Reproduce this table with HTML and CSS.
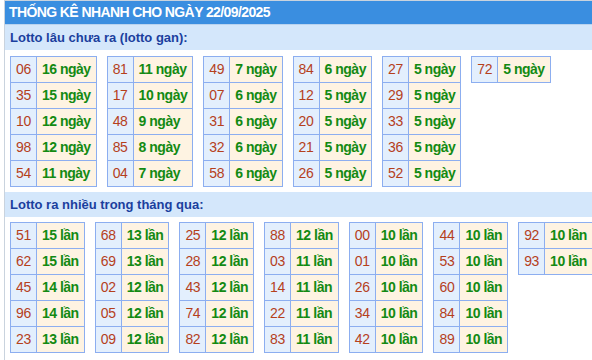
FILE: index.html
```html
<!DOCTYPE html>
<html lang="vi">
<head>
<meta charset="utf-8">
<link rel="stylesheet" href="styles.css">
</head>
<body>
<div class="box">
  <div class="title">THỐNG KÊ NHANH CHO NGÀY 22/09/2025</div>
  <div class="sub">Lotto lâu chưa ra (lotto gan):</div>
  <div class="tables first">
    <table><tr><td class="n">06</td><td class="v">16 ngày</td></tr><tr><td class="n">35</td><td class="v">15 ngày</td></tr><tr><td class="n">10</td><td class="v">12 ngày</td></tr><tr><td class="n">98</td><td class="v">12 ngày</td></tr><tr><td class="n">54</td><td class="v">11 ngày</td></tr></table>
    <table><tr><td class="n">81</td><td class="v">11 ngày</td></tr><tr><td class="n">17</td><td class="v">10 ngày</td></tr><tr><td class="n">48</td><td class="v">9 ngày</td></tr><tr><td class="n">85</td><td class="v">8 ngày</td></tr><tr><td class="n">04</td><td class="v">7 ngày</td></tr></table>
    <table><tr><td class="n">49</td><td class="v">7 ngày</td></tr><tr><td class="n">07</td><td class="v">6 ngày</td></tr><tr><td class="n">31</td><td class="v">6 ngày</td></tr><tr><td class="n">32</td><td class="v">6 ngày</td></tr><tr><td class="n">58</td><td class="v">6 ngày</td></tr></table>
    <table><tr><td class="n">84</td><td class="v">6 ngày</td></tr><tr><td class="n">12</td><td class="v">5 ngày</td></tr><tr><td class="n">20</td><td class="v">5 ngày</td></tr><tr><td class="n">21</td><td class="v">5 ngày</td></tr><tr><td class="n">26</td><td class="v">5 ngày</td></tr></table>
    <table><tr><td class="n">27</td><td class="v">5 ngày</td></tr><tr><td class="n">29</td><td class="v">5 ngày</td></tr><tr><td class="n">33</td><td class="v">5 ngày</td></tr><tr><td class="n">36</td><td class="v">5 ngày</td></tr><tr><td class="n">52</td><td class="v">5 ngày</td></tr></table>
    <table><tr><td class="n">72</td><td class="v">5 ngày</td></tr></table>
  </div>
  <div class="sub">Lotto ra nhiều trong tháng qua:</div>
  <div class="tables">
    <table><tr><td class="n">51</td><td class="v">15 lần</td></tr><tr><td class="n">62</td><td class="v">15 lần</td></tr><tr><td class="n">45</td><td class="v">14 lần</td></tr><tr><td class="n">96</td><td class="v">14 lần</td></tr><tr><td class="n">23</td><td class="v">13 lần</td></tr></table>
    <table><tr><td class="n">68</td><td class="v">13 lần</td></tr><tr><td class="n">69</td><td class="v">13 lần</td></tr><tr><td class="n">02</td><td class="v">12 lần</td></tr><tr><td class="n">05</td><td class="v">12 lần</td></tr><tr><td class="n">09</td><td class="v">12 lần</td></tr></table>
    <table><tr><td class="n">25</td><td class="v">12 lần</td></tr><tr><td class="n">28</td><td class="v">12 lần</td></tr><tr><td class="n">43</td><td class="v">12 lần</td></tr><tr><td class="n">74</td><td class="v">12 lần</td></tr><tr><td class="n">82</td><td class="v">12 lần</td></tr></table>
    <table><tr><td class="n">88</td><td class="v">12 lần</td></tr><tr><td class="n">03</td><td class="v">11 lần</td></tr><tr><td class="n">14</td><td class="v">11 lần</td></tr><tr><td class="n">22</td><td class="v">11 lần</td></tr><tr><td class="n">83</td><td class="v">11 lần</td></tr></table>
    <table><tr><td class="n">00</td><td class="v">10 lần</td></tr><tr><td class="n">01</td><td class="v">10 lần</td></tr><tr><td class="n">26</td><td class="v">10 lần</td></tr><tr><td class="n">34</td><td class="v">10 lần</td></tr><tr><td class="n">42</td><td class="v">10 lần</td></tr></table>
    <table><tr><td class="n">44</td><td class="v">10 lần</td></tr><tr><td class="n">53</td><td class="v">10 lần</td></tr><tr><td class="n">60</td><td class="v">10 lần</td></tr><tr><td class="n">84</td><td class="v">10 lần</td></tr><tr><td class="n">89</td><td class="v">10 lần</td></tr></table>
    <table><tr><td class="n">92</td><td class="v">10 lần</td></tr><tr><td class="n">93</td><td class="v">10 lần</td></tr></table>
  </div>
</div>
</body>
</html>
```
FILE: styles.css
```css
html, body {
  margin: 0;
  padding: 0;
  background: #fff;
  font-family: Arial, "Liberation Sans", sans-serif;
  overflow: hidden;
}
.box {
  margin-left: 4px;
  border-left: 1px solid #c9d3de;
  border-top: 1px solid #c9d3de;
  min-height: 359px;
}
.title {
  background: #3a8ee0;
  color: #fff;
  font-weight: bold;
  font-size: 14px;
  letter-spacing: -0.6px;
  line-height: 23px;
  padding-left: 4px;
  border-bottom: 1px solid #b9d3ef;
}
.sub {
  background: #d4e7fb;
  color: #1b3f9e;
  font-weight: bold;
  font-size: 13px;
  line-height: 25px;
  padding-left: 5px;
}
.tables {
  display: flex;
  flex-wrap: nowrap;
  align-items: flex-start;
  gap: 10px;
  padding: 5px;
}
.tables.first {
  padding-top: 6px;
}
table {
  flex: none;
  border-collapse: collapse;
  border: 1px solid #8caef0;
}
td {
  border: 1px solid #8caef0;
  font-size: 14px;
  line-height: 17px;
  padding: 4px 5px;
  white-space: nowrap;
}
td.n {
  background: #e3effd;
  color: #b5401c;
  letter-spacing: -0.3px;
}
td.v {
  background: #fef3e2;
  color: #138a13;
  font-weight: bold;
  letter-spacing: -0.5px;
}
```
